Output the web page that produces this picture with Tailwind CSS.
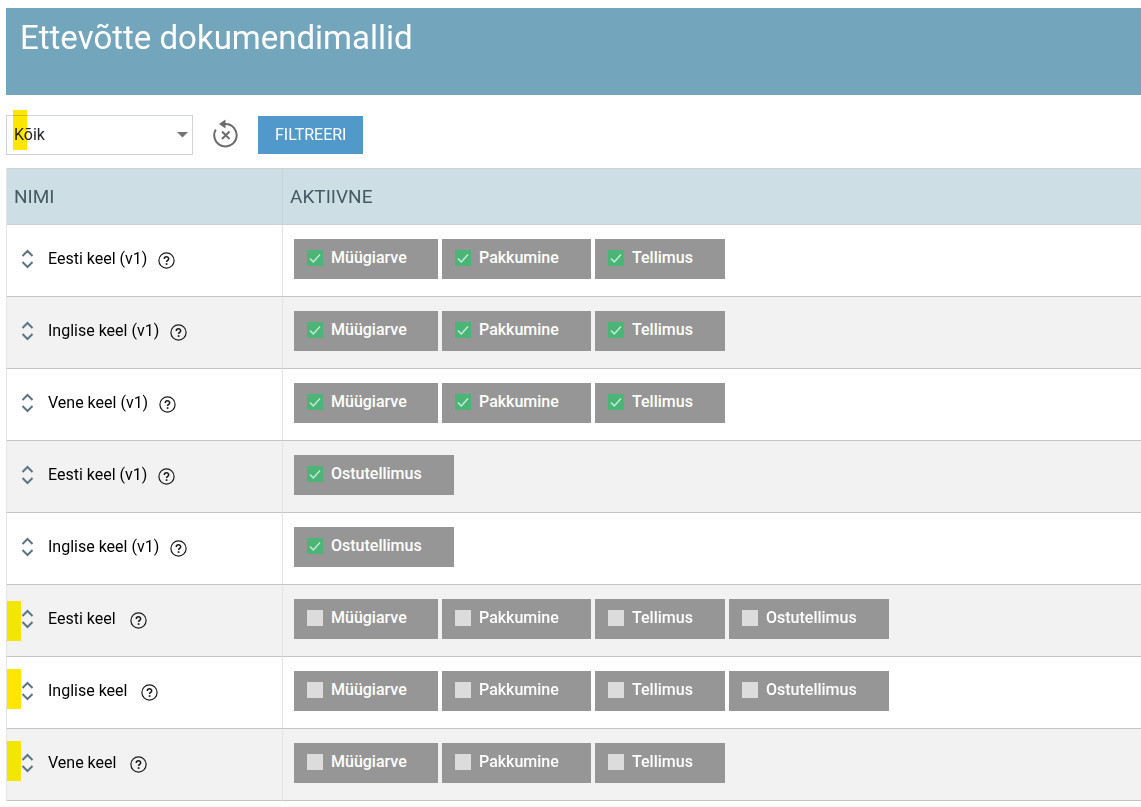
<!DOCTYPE html>
<html lang="et">
<head>
  <meta charset="UTF-8">
  <meta name="viewport" content="width=device-width, initial-scale=1.0">
  <title>Ettevõtte dokumendimallid</title>
  <script src="https://cdn.jsdelivr.net/npm/@tailwindcss/browser@4"></script>
</head>
<body class="bg-white font-[Roboto,sans-serif] text-base text-black overflow-x-hidden">

<div class="pt-2 pl-1.5">
  <!-- Header -->
  <header class="bg-[#73a6bc] h-[87px] px-3.5 pt-2.5">
    <h1 class="text-[33px] leading-10 text-white">Ettevõtte dokumendimallid</h1>
  </header>

  <!-- Filter -->
  <form id="filterForm" class="flex items-center h-[73px] pt-1.5">
    <div class="relative w-[187px]">
      <select id="typeFilter" aria-label="Dokumendi liik" class="appearance-none block w-full h-10 border border-[#ced4da] bg-white pl-[7px] pr-7 text-[#212529]">
        <option>Kõik</option>
        <option>Müügiarve</option>
        <option>Pakkumine</option>
        <option>Tellimus</option>
        <option>Ostutellimus</option>
      </select>
      <svg class="absolute right-[5px] top-[17px] w-[11px] h-[6px] pointer-events-none" viewBox="0 0 11 6" fill="#757575"><path d="M0 0h11L5.500 5.500z"/></svg>
      <span class="absolute left-[7px] -top-[5px] w-3.5 h-10 bg-[#ffe600] mix-blend-multiply pointer-events-none"></span>
    </div>
    <button type="reset" aria-label="Tühista filter" class="ml-5 w-[26px] h-8">
      <svg class="w-[26px] h-8" viewBox="0 0 26 32" fill="none" stroke="#6b6b6b" stroke-width="2">
        <path d="M2.800 10.500A11.200 11.200 0 1 0 12.500 5H11"/>
        <path d="M12.500 .5v9L6 5z" fill="#6b6b6b" stroke="none"/>
        <path d="M9 12.500l7.500 7.500M16.500 12.500L9 20"/>
      </svg>
    </button>
    <button type="submit" class="ml-[19px] h-[38px] px-[17px] bg-[#5199cb] text-white">FILTREERI</button>
  </form>

  <!-- Templates -->
  <table class="w-full border-separate border-spacing-0 border-l border-[#e4e4e4]">
    <thead>
      <tr class="h-[57px] bg-[#cddee4] text-left text-[19px] leading-7 text-[#465a65]">
        <th class="w-[276px] border-y border-r border-[#cfd2d4] pl-[7px] font-normal">NIMI</th>
        <th class="border-y border-[#cfd2d4] pl-[7px] font-normal">AKTIIVNE</th>
      </tr>
    </thead>
    <tbody id="templateRows"></tbody>
  </table>
</div>

<script>
  const sales = ['Müügiarve', 'Pakkumine', 'Tellimus'];
  const chipWidths = {
    'Müügiarve': 'w-[144px]',
    'Pakkumine': 'w-[149px]',
    'Tellimus': 'w-[130px]',
    'Ostutellimus': 'w-[160px]',
  };
  const templates = [
    { name: 'Eesti keel (v1)', types: sales, active: true },
    { name: 'Inglise keel (v1)', types: sales, active: true },
    { name: 'Vene keel (v1)', types: sales, active: true },
    { name: 'Eesti keel (v1)', types: ['Ostutellimus'], active: true },
    { name: 'Inglise keel (v1)', types: ['Ostutellimus'], active: true },
    { name: 'Eesti keel', types: [...sales, 'Ostutellimus'], mark: 'top-4 bg-[#f3e600]' },
    { name: 'Inglise keel', types: [...sales, 'Ostutellimus'], mark: 'top-3 bg-[#ffe600]' },
    { name: 'Vene keel', types: sales, mark: 'top-3 bg-[#f3e600]' },
  ];

  function chip(type, active, id) {
    return `
      <label for="${id}" class="relative flex h-10 ${chipWidths[type]} bg-[#969696] pl-[13px] font-medium text-white">
        <input id="${id}" type="checkbox" ${active ? 'checked' : ''} class="peer appearance-none mt-[11px] mr-2 w-4 h-4 bg-[#dcdcdc] checked:bg-[#4bb577]">
        <svg class="hidden peer-checked:block absolute left-[13px] top-[11px] w-4 h-4 pointer-events-none" viewBox="0 0 16 16" fill="none" stroke="#c9ead6" stroke-width="1.500"><path d="M3 8.500l3.300 3.500L13 4.500"/></svg>
        <span class="leading-[38px]">${type}</span>
      </label>`;
  }

  document.getElementById('templateRows').innerHTML = templates.map((t, i) => `
    <tr class="h-[72px] even:bg-[#f2f2f2]">
      <td class="relative border-b border-b-[#c4c4c4] border-r border-r-[#e4e4e4] pl-3.5 pb-[3px]">
        ${t.mark ? `<span class="absolute left-0 w-3.5 h-10 ${t.mark}"></span>` : ''}
        <div class="flex items-center">
          <button type="button" aria-label="Muuda järjekorda" class="w-[13px] h-5">
            <svg class="w-[13px] h-5" viewBox="0 0 13 20" fill="none" stroke="#5b7682" stroke-width="2"><path d="M1.500 7l5-5 5 5M1.500 13l5 5 5-5"/></svg>
          </button>
          <span class="ml-3.5 leading-6">${t.name}</span>
          <button type="button" aria-label="Abi" class="${t.mark ? 'ml-3.5' : 'ml-[11px]'} mt-0.5 w-[17px] h-[17px]">
            <svg class="w-[17px] h-[17px]" viewBox="0 0 17 17" fill="none" stroke="#1a1a1a" stroke-width="1.200">
              <circle cx="8.500" cy="8.500" r="7.600"/>
              <path d="M6.300 6.900c0-2.800 4.400-2.700 4.400-.2 0 1.600-2.100 1.600-2.100 3.200" stroke-width="1.500"/>
              <path d="M8.600 11.200v1.700" stroke-width="1.700"/>
            </svg>
          </button>
        </div>
      </td>
      <td class="border-b border-[#c4c4c4] pl-[11px] align-top pt-3.5">
        <div class="flex gap-1">${t.types.map((type, j) => chip(type, t.active, `t${i}-${j}`)).join('')}</div>
      </td>
    </tr>`).join('');

  document.getElementById('filterForm').addEventListener('submit', (e) => e.preventDefault());
</script>
</body>
</html>
